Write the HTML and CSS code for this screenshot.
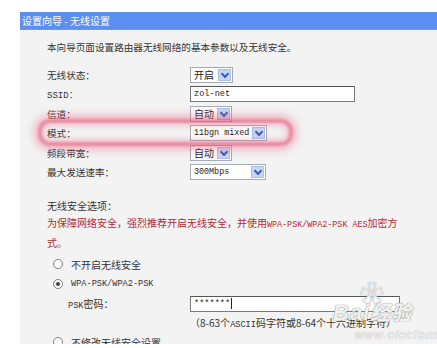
FILE: index.html
```html
<!DOCTYPE html>
<html lang="zh-CN">
<head>
    <meta charset="UTF-8">
    <meta name="viewport" content="width=device-width, initial-scale=1.0">
    <title>设置向导 - 无线设置</title>
    <link rel="stylesheet" href="styles.css">
</head>
<body>
    <div class="page">
        <!-- Title bar -->
        <div class="title-bar">设置向导 - 无线设置</div>

        <!-- Main panel -->
        <div class="panel">
            <p class="intro">本向导页面设置路由器无线网络的基本参数以及无线安全。</p>

            <div class="form">
                <div class="label">无线状态：</div>
                <div><span class="select w-43">开启<i class="arrow"></i></span></div>

                <div class="label latin">SSID：</div>
                <div><span class="input w-165">zol-net</span></div>

                <div class="label">信道：</div>
                <div><span class="select w-42">自动<i class="arrow"></i></span></div>

                <div class="label">模式：</div>
                <div><span class="select w-77 mono">11bgn mixed<i class="arrow"></i></span></div>

                <div class="label">频段带宽：</div>
                <div><span class="select w-42">自动<i class="arrow"></i></span></div>

                <div class="label">最大发送速率：</div>
                <div><span class="select w-76 mono">300Mbps<i class="arrow"></i></span></div>
            </div>

            <!-- highlight drawn over the mode row -->
            <div class="mode-mark"></div>

            <p class="section">无线安全选项：</p>
            <p class="warn">为保障网络安全，强烈推荐开启无线安全，并使用<span class="mono">WPA-PSK/WPA2-PSK AES</span>加密方式。</p>

            <div class="radio-row"><span class="radio"></span>不开启无线安全</div>
            <div class="radio-row"><span class="radio checked"></span><span class="mono">WPA-PSK/WPA2-PSK</span></div>
            <div class="psk-row">
                <div class="psk-label"><span class="mono">PSK</span>密码：</div>
                <div><span class="input w-210 mono">*******<i class="caret"></i></span></div>
            </div>
            <div class="hint-row">（8-63个<span class="mono">ASCII</span>码字符或8-64个十六进制字符）</div>
            <div class="radio-row"><span class="radio"></span>不修改无线安全设置</div>

            <!-- watermark -->
            <div class="watermark">
                <span class="wm-paw">❀</span>
                <span class="wm-logo">Bai<b>经验</b></span>
                <span class="wm-site">www.elecfans.com</span>
            </div>
        </div>
    </div>
</body>
</html>
```

FILE: styles.css
```css
* {
    margin: 0;
    padding: 0;
    box-sizing: border-box;
}
:root {
    --bar-color: #5d8ff0;
    --panel-bg: #f3f3f3;
    --text-color: #333333;
    --warn-color: #b8292e;
    --field-border: #a4abb4;
}
body {
    font-family: "Noto Sans CJK SC", "Liberation Sans", sans-serif;
    font-size: 10px;
    color: var(--text-color);
    background: #ffffff;
}
.page {
    padding: 12px 0 0 20px;
}
/* Title bar */
.title-bar {
    height: 18px;
    line-height: 17px;
    background: var(--bar-color);
    border-bottom: 1px solid #7f95c4;
    color: #ffffff;
    padding-left: 2px;
    font-size: 10px;
}
/* Panel */
.panel {
    position: relative;
    height: 314px;
    overflow: hidden;
    background: var(--panel-bg);
    padding: 9px 0 0 27px;
}
.intro {
    line-height: 16px;
    font-size: 9.6px;
}
.form {
    display: grid;
    grid-template-columns: 143px auto;
    grid-auto-rows: 19.5px;
    align-items: center;
    margin-top: 10px;
}
.label {
    font-size: 9.6px;
}
.latin {
    font-family: "Liberation Mono", monospace;
    font-size: 9px;
}
.mono {
    font-family: "Liberation Mono", monospace;
    font-size: 8.6px;
}
/* Fields */
.select,
.input {
    display: flex;
    align-items: center;
    height: 16px;
    background: #ffffff;
    border: 1px solid var(--field-border);
    padding-left: 3px;
    font-size: 10px;
    color: #222222;
    position: relative;
}
.select.mono {
    font-size: 8.4px;
}
.input {
    border-color: #7a7a7a;
    border-top-color: #555555;
    font-family: "Liberation Mono", monospace;
    font-size: 8.6px;
}
.select .arrow {
    position: absolute;
    right: 1px;
    top: 1px;
    width: 13px;
    height: 12px;
    background: #c8d6f4;
    border: 1px solid #aebfe6;
}
.select .arrow::after {
    content: "";
    position: absolute;
    left: 3px;
    top: 1px;
    width: 4px;
    height: 4px;
    border-right: 2px solid #3a5fb8;
    border-bottom: 2px solid #3a5fb8;
    transform: rotate(45deg);
}
.w-42 { width: 42px; }
.w-43 { width: 43px; }
.w-76 { width: 76px; }
.w-77 { width: 77px; }
.w-165 { width: 165px; }
.w-210 { width: 210px; }
.caret {
    display: inline-block;
    width: 1px;
    height: 11px;
    background: #222222;
    margin-left: 1px;
}
/* Red highlight round the mode row */
.mode-mark {
    position: absolute;
    left: 18px;
    top: 89px;
    width: 255px;
    height: 27px;
    border: 4px solid rgba(226, 70, 110, 0.6);
    border-radius: 12px;
    filter: blur(1px);
    box-shadow: 0 0 8px 3px rgba(236, 96, 130, 0.5), inset 0 0 6px 2px rgba(236, 96, 130, 0.4);
}
/* Security section */
.section {
    margin-top: 14.5px;
    line-height: 17px;
}
.warn {
    color: var(--warn-color);
    line-height: 17px;
    width: 368px;
}
.warn .mono {
    font-size: 8.4px;
}
.radio-row {
    display: flex;
    align-items: center;
    gap: 8px;
    height: 20px;
    padding-left: 6px;
}
.section + .warn + .radio-row {
    margin-top: 3.5px;
}
.radio {
    width: 10px;
    height: 10px;
    border: 1px solid #7d7d7d;
    border-radius: 50%;
    background: #ffffff;
    position: relative;
}
.radio.checked::after {
    content: "";
    position: absolute;
    left: 2px;
    top: 2px;
    width: 4px;
    height: 4px;
    border-radius: 50%;
    background: #444444;
}
.psk-row {
    display: grid;
    grid-template-columns: 143px auto;
    align-items: center;
    height: 19px;
}
.psk-label {
    padding-left: 21px;
}
.hint-row {
    height: 19px;
    line-height: 19px;
    padding-left: 143px;
}
.hint-row .mono {
    font-size: 8.6px;
}
/* Watermark */
.watermark {
    position: absolute;
    left: 285px;
    top: 245px;
    width: 150px;
    height: 70px;
    color: #ffffff;
    pointer-events: none;
}
.wm-paw {
    position: absolute;
    left: 55px;
    top: 0;
    font-size: 24px;
    color: #ffffff;
    text-shadow: 0 0 1px #9a9a9a, 0 0 1px #9a9a9a;
}
.wm-logo {
    position: absolute;
    left: 28px;
    top: 22px;
    font-family: "Liberation Sans", sans-serif;
    font-size: 22px;
    font-weight: bold;
    font-style: italic;
    letter-spacing: 1px;
    color: rgba(255, 255, 255, 0.9);
    text-shadow: 0 0 1px #8e8e8e, 0 0 1px #8e8e8e;
}
.wm-logo b {
    font-family: "Noto Sans CJK SC", sans-serif;
    font-size: 20px;
}
.wm-site {
    position: absolute;
    left: 50px;
    top: 53px;
    font-family: "Liberation Sans", sans-serif;
    font-size: 12px;
    font-style: italic;
    letter-spacing: 1px;
    color: rgba(255, 255, 255, 0.9);
    text-shadow: 0 0 1px #8e8e8e;
}
```
